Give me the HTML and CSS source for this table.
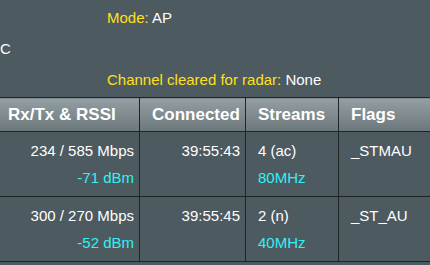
FILE: index.html
```html
<!DOCTYPE html>
<html>
<head>
<meta charset="utf-8">
<link rel="stylesheet" href="styles.css">
</head>
<body>
<div class="page">
  <div class="info">
    <div class="line indent"><span class="label">Mode:</span> AP</div>
    <div class="line">C</div>
    <div class="line indent"><span class="label">Channel cleared for radar:</span> None</div>
  </div>
  <table class="clients">
    <colgroup>
      <col class="c1"><col class="c2"><col class="c3"><col class="c4">
    </colgroup>
    <thead>
      <tr>
        <th>Rx/Tx &amp; RSSI</th>
        <th>Connected</th>
        <th>Streams</th>
        <th>Flags</th>
      </tr>
    </thead>
    <tbody>
      <tr>
        <td class="num">234 / 585 Mbps<br><span class="hl">-71 dBm</span></td>
        <td class="num">39:55:43<br>&nbsp;</td>
        <td>4 (ac)<br><span class="hl">80MHz</span></td>
        <td>_STMAU<br>&nbsp;</td>
      </tr>
      <tr>
        <td class="num">300 / 270 Mbps<br><span class="hl">-52 dBm</span></td>
        <td class="num">39:55:45<br>&nbsp;</td>
        <td>2 (n)<br><span class="hl">40MHz</span></td>
        <td>_ST_AU<br>&nbsp;</td>
      </tr>
    </tbody>
  </table>
</div>
</body>
</html>
```

FILE: styles.css
```css
html, body {
  margin: 0;
  padding: 0;
  background: #4d5a5f;
}
body {
  font-family: "Liberation Sans", Arial, sans-serif;
  font-size: 15px;
  color: #ffffff;
}
.page {
  width: 430px;
  height: 265px;
  overflow: hidden;
}
.info {
  padding-top: 2px;
}
.line {
  line-height: 31px;
  height: 31px;
  white-space: nowrap;
}
.indent {
  padding-left: 107px;
}
.label {
  color: #ffe11a;
}
.clients {
  margin-top: 2px;
  margin-left: -5px;
  border-collapse: collapse;
  table-layout: fixed;
  width: 437px;
}
.c1 { width: 144px; }
.c2 { width: 106px; }
.c3 { width: 93px; }
.c4 { width: 94px; }
.clients th,
.clients td {
  border: 1px solid #1f2527;
  white-space: nowrap;
  overflow: hidden;
}
.clients th {
  height: 33px;
  padding: 0 0 0 12px;
  text-align: left;
  font-size: 17px;
  font-weight: bold;
  color: #ffffff;
  background: linear-gradient(to bottom, #949fa3 0%, #7f8b8f 50%, #6b777b 100%);
  vertical-align: middle;
}
.clients td {
  height: 64px;
  box-sizing: border-box;
  padding: 5px 5px 5px 12px;
  line-height: 27px;
  vertical-align: top;
  text-align: left;
}
.clients td.num {
  text-align: right;
  padding-left: 4px;
}
.hl {
  color: #33f0f5;
}
```
